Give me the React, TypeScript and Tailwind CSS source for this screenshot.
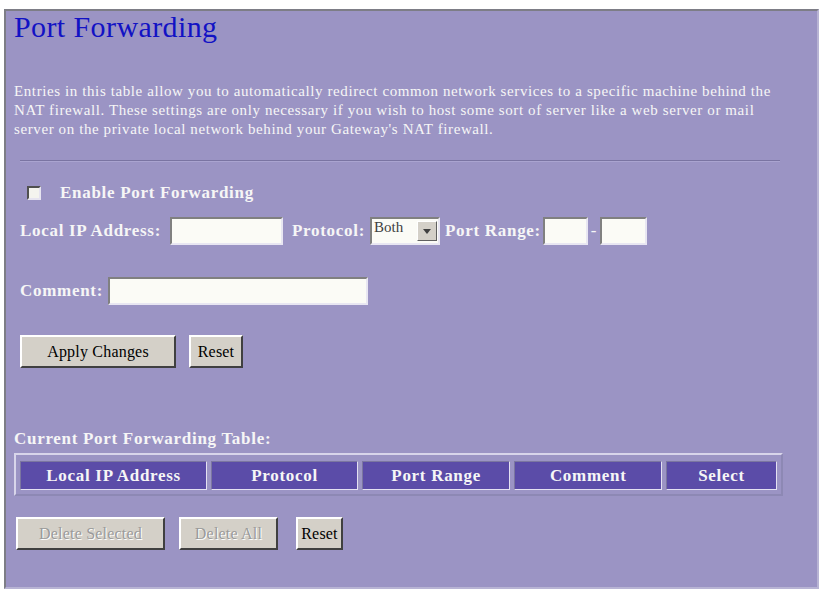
const serif = "font-['Liberation_Serif','Times_New_Roman',serif]";
const label = "text-[17px] font-bold text-[#f6f6f6] tracking-[0.7px]";

function TextBox({ className }: { className: string }) {
  return (
    <div
      className={`h-[28px] bg-[#fbfbf6] border-2 border-t-[#808080] border-l-[#808080] border-b-[#e8e6f2] border-r-[#e8e6f2] ${className}`}
    />
  );
}

function Btn({ label, className, disabled }: { label: string; className: string; disabled?: boolean }) {
  return (
    <button
      type="button"
      className={`h-[33px] bg-[#d4d0c8] border-2 border-t-[#ffffff] border-l-[#ffffff] border-b-[#404040] border-r-[#404040] text-[16px] tracking-[0.2px] ${
        disabled ? "text-[#9a9a9a] [text-shadow:1px_1px_0_#ffffff]" : "text-black"
      } ${className}`}
    >
      {label}
    </button>
  );
}

const columns = [
  { name: "Local IP Address", w: "w-[189px]" },
  { name: "Protocol", w: "w-[148px]" },
  { name: "Port Range", w: "w-[150px]" },
  { name: "Comment", w: "w-[149px]" },
  { name: "Select", w: "w-[112px]" },
];

export default function App() {
  return (
    <div className={`w-[820px] h-[590px] bg-white pt-[9px] pl-[4px] ${serif}`}>
      <div className="w-[815px] h-[580px] bg-[#9b94c4] border-2 border-t-[#7d7d86] border-l-[#7d7d86] border-b-[#b8b4d4] border-r-[#b8b4d4] pl-[8px]">
        <h1 className="text-[30px] leading-[32px] text-[#1212c4] tracking-[0.4px]">Port Forwarding</h1>

        <p className="mt-[39px] text-[15px] leading-[19px] text-[#f6f6f6] tracking-[0.6px] whitespace-nowrap">
          Entries in this table allow you to automatically redirect common network services to a specific machine behind the
          <br />
          NAT firewall. These settings are only necessary if you wish to host some sort of server like a web server or mail
          <br />
          server on the private local network behind your Gateway's NAT firewall.
        </p>

        <div className="mt-[21px] ml-[6px] w-[760px] h-[2px] border-t border-t-[#7a74a2] border-b border-b-[#aaa4d0]" />

        <div className="mt-[19px] h-[24px] flex items-center pl-[13px]">
          <div className="w-[14px] h-[14px] bg-[#f4f4ee] border-2 border-t-[#505050] border-l-[#505050] border-b-[#e6e4f0] border-r-[#e6e4f0]" />
          <span className={`ml-[19px] ${label}`}>Enable Port Forwarding</span>
        </div>

        <div className={`mt-[12px] h-[28px] flex items-center pl-[6px] ${label}`}>
          <span className="w-[150px] whitespace-nowrap">Local IP Address:</span>
          <TextBox className="w-[113px]" />
          <span className="ml-[9px] w-[78px]">Protocol:</span>
          <div className="w-[70px] h-[28px] flex bg-[#fbfbf6] border-2 border-t-[#808080] border-l-[#808080] border-b-[#e8e6f2] border-r-[#e8e6f2]">
            <span className="flex-1 pl-[2px] text-[15px] font-normal tracking-normal leading-[16px] text-[#404040]">Both</span>
            <div className="w-[20px] mt-[2px] mr-[1px] h-[20px] bg-[#d4d0c8] border border-t-[#ffffff] border-l-[#ffffff] border-b-[#606060] border-r-[#606060] flex items-center justify-center">
              <svg width="8" height="5" viewBox="0 0 8 5">
                <path d="M0 0 H8 L4 5 Z" fill="#404040" />
              </svg>
            </div>
          </div>
          <span className="ml-[5px] w-[98px] whitespace-nowrap">Port Range:</span>
          <TextBox className="w-[45px]" />
          <span className="w-[12px] text-center font-normal">-</span>
          <TextBox className="w-[47px]" />
        </div>

        <div className={`mt-[32px] h-[28px] flex items-center pl-[6px] ${label}`}>
          <span className="w-[88px]">Comment:</span>
          <TextBox className="w-[260px]" />
        </div>

        <div className="mt-[30px] flex items-center pl-[6px] gap-[13px]">
          <Btn label="Apply Changes" className="w-[156px]" />
          <Btn label="Reset" className="w-[54px]" />
        </div>

        <div className={`mt-[61px] h-[20px] leading-[20px] ${label}`}>Current Port Forwarding Table:</div>

        <div className="mt-[4px] w-[769px] border-2 border-t-[#d8d5ea] border-l-[#d8d5ea] border-b-[#8d88b4] border-r-[#8d88b4] p-[4px] pt-[6px] flex gap-[4px]">
          {columns.map((c) => (
            <div
              key={c.name}
              className={`${c.w} h-[29px] bg-[#5b4ca8] border border-t-[#7b76a0] border-l-[#7b76a0] border-b-[#e4e1f2] border-r-[#e4e1f2] flex items-center justify-center ${label}`}
            >
              {c.name}
            </div>
          ))}
        </div>

        <div className="mt-[21px] flex items-center pl-[2px]">
          <Btn label="Delete Selected" className="w-[149px]" disabled />
          <Btn label="Delete All" className="ml-[14px] w-[99px]" disabled />
          <Btn label="Reset" className="ml-[18px] w-[47px]" />
        </div>
      </div>
    </div>
  );
}
